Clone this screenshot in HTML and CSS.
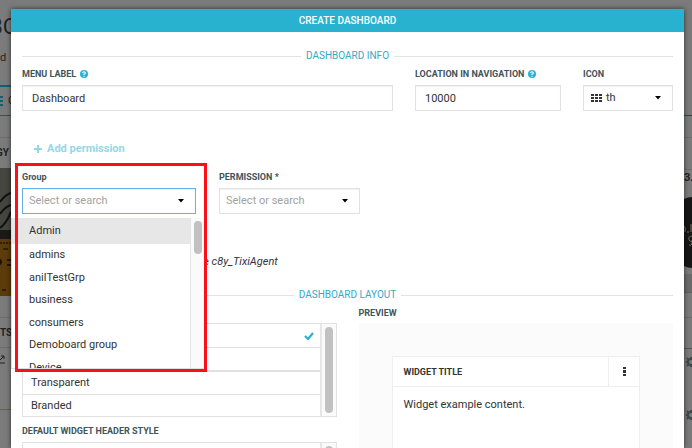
FILE: index.html
```html
<!DOCTYPE html>
<html lang="en">
<head>
<meta charset="utf-8">
<title>Create dashboard</title>
<link rel="stylesheet" href="styles.css">
</head>
<body>
<div class="backdrop" aria-hidden="true">
  <div class="side side-left">
    <div class="page-title">BC</div>
    <div class="crumb">d</div>
    <div class="tab">
      <svg width="3" height="10" viewBox="0 0 3 10"><path d="M0 0h3v2H0zM0 4h3v2H0zM0 8h3v2H0z" fill="#12606d"/></svg>
      <span>C</span>
    </div>
    <div class="gap-row"></div>
    <div class="card-title">GY</div>
    <svg class="photo" width="11" height="128" viewBox="0 0 11 128">
      <path d="M0 0h11v128H0z" fill="#454640"/>
      <path d="M0 34Q6 26 11 25M0 46Q6 38 11 37M0 60Q6 56 11 44" fill="none" stroke="#111" stroke-width="2"/>
      <path d="M0 71h11v57H0z" fill="#5d3c0b"/>
      <path d="M0 62h11v9H0z" fill="#1b1a16"/>
      <path d="M0 75h2M3 75h2M6 75h2M9 75h2M3 81h5M2 122h4" stroke="#2b210d" stroke-width="2"/>
      <circle cx="-1" cy="94" r="3" fill="#181209"/>
      <path d="M7 92h4M7 97h4" stroke="#1d1609" stroke-width="2"/>
    </svg>
    <div class="photo-foot"></div>
    <div class="card-title second">TS</div>
    <div class="chart">
      <svg width="5" height="9" viewBox="0 0 5 9"><path d="M0 5l4-4M1 1h3v3M0 8h5" fill="none" stroke="#222" stroke-width="1"/></svg>
    </div>
    <div class="chart-rest"></div>
  </div>
  <div class="side side-right">
    <div class="r-top"></div>
    <div class="r-tab"></div>
    <div class="r-gap"></div>
    <div class="r-title">3.</div>
    <svg width="8" height="72" viewBox="0 0 8 72">
      <path d="M0 2Q4 0 8 0v71Q4 71 0 69z" fill="#161616"/>
      <path d="M0 29q2 1 1 6M3 35h2M7 27v8M8 39q-4 0-3 4 1 2 3 1v3q-1 2-3 1" stroke="#77705f" stroke-width="1" fill="none"/>
    </svg>
    <div class="r-foot"></div>
    <div class="r-band"></div>
    <div class="r-row"></div>
    <div class="r-head"></div>
    <div class="gears">
      <svg width="6" height="10" viewBox="0 0 6 10"><circle cx="5" cy="5" r="3" fill="none" stroke="#3e4a4b" stroke-width="2"/><path d="M0 5h2M5 0v2M5 8v2M1 1l2 2M1 9l2-2" stroke="#3e4a4b" stroke-width="2"/></svg>
      <svg width="6" height="10" viewBox="0 0 6 10"><circle cx="5" cy="5" r="3" fill="none" stroke="#3e4a4b" stroke-width="2"/><path d="M0 5h2M5 0v2M5 8v2M1 1l2 2M1 9l2-2" stroke="#3e4a4b" stroke-width="2"/></svg>
    </div>
  </div>
</div>

<main class="modal" role="dialog" aria-labelledby="modal-title">
  <h1 class="modal-title" id="modal-title">CREATE DASHBOARD</h1>
  <form class="modal-body">
    <h2 class="legend">DASHBOARD INFO</h2>
    <div class="info-row">
      <div class="field grow">
        <div class="label-line">
          <label for="menu-label">MENU LABEL</label>
          <svg width="8" height="8" viewBox="0 0 8 8"><circle cx="4" cy="4" r="4" fill="#28b2cf"/><path d="M2.6 3.1Q2.7 1.8 4 1.8T5.4 3Q5.4 3.8 4 4.2v.8M4 5.7v1" fill="none" stroke="#fff" stroke-width="1.1"/></svg>
        </div>
        <input class="control" id="menu-label" type="text" value="Dashboard">
      </div>
      <div class="field location">
        <div class="label-line">
          <label for="location">LOCATION IN NAVIGATION</label>
          <svg width="8" height="8" viewBox="0 0 8 8"><circle cx="4" cy="4" r="4" fill="#28b2cf"/><path d="M2.6 3.1Q2.7 1.8 4 1.8T5.4 3Q5.4 3.8 4 4.2v.8M4 5.7v1" fill="none" stroke="#fff" stroke-width="1.1"/></svg>
        </div>
        <input class="control" id="location" type="text" value="10000">
      </div>
      <div class="field icon-field">
        <div class="label-line"><label for="icon">ICON</label></div>
        <button class="control icon-button" id="icon" type="button">
          <svg width="11" height="8" viewBox="0 0 11 8"><path d="M0 0h3v2H0zM4 0h3v2H4zM8 0h3v2H8zM0 3h3v2H0zM4 3h3v2H4zM8 3h3v2H8zM0 6h3v2H0zM4 6h3v2H4zM8 6h3v2H8z" fill="#333"/></svg>
          <span>th</span>
          <svg class="caret" width="6" height="4" viewBox="0 0 6 4"><path d="M0 0h6L3 3.6z" fill="#000"/></svg>
        </button>
      </div>
    </div>

    <button class="add" type="button">
      <svg width="8" height="8" viewBox="0 0 8 8"><path d="M4 0v8M0 4h8" stroke="#93d8e7" stroke-width="2"/></svg>
      <span>Add permission</span>
    </button>

    <div class="permission-row">
      <div class="field group-field">
        <div class="label-line"><label for="group">Group</label></div>
        <div class="control combo focused">
          <input id="group" type="text" placeholder="Select or search">
          <svg width="6" height="4" viewBox="0 0 6 4"><path d="M0 0h6L3 3.6z" fill="#000"/></svg>
        </div>
        <div class="menu">
          <ul class="options" role="listbox" aria-label="Group">
            <li class="active" role="option" aria-selected="true">Admin</li>
            <li role="option">admins</li>
            <li role="option">anilTestGrp</li>
            <li role="option">business</li>
            <li role="option">consumers</li>
            <li role="option">Demoboard group</li>
            <li role="option">Device</li>
          </ul>
          <div class="track"><div class="thumb"></div></div>
        </div>
        <div class="highlight"></div>
      </div>
      <div class="field permission-field">
        <div class="label-line"><label for="permission">PERMISSION *</label></div>
        <div class="control combo">
          <input id="permission" type="text" placeholder="Select or search">
          <svg width="6" height="4" viewBox="0 0 6 4"><path d="M0 0h6L3 3.6z" fill="#000"/></svg>
        </div>
      </div>
    </div>

    <p class="note">e <em>c8y_TixiAgent</em></p>

    <h2 class="legend">DASHBOARD LAYOUT</h2>
    <div class="layout-row">
      <section class="column">
        <div class="style-list first">
          <div class="choices">
            <button type="button" aria-label="First style">
              <svg width="10" height="8" viewBox="0 0 10 8"><path d="M1 4l3 3 5-6" fill="none" stroke="#28b2cf" stroke-width="2.2"/></svg>
            </button>
            <button type="button" aria-label="Second style"></button>
            <button type="button">Transparent</button>
            <button type="button">Branded</button>
          </div>
          <div class="track"><div class="thumb"></div></div>
        </div>
        <h3 class="subhead">DEFAULT WIDGET HEADER STYLE</h3>
        <div class="style-list">
          <div class="choices">
            <button type="button" aria-label="Header style"></button>
          </div>
          <div class="track"><div class="thumb"></div></div>
        </div>
      </section>
      <section class="column">
        <h3 class="preview-label">PREVIEW</h3>
        <div class="preview">
          <article class="widget">
            <header>
              <h4>WIDGET TITLE</h4>
              <button type="button" aria-label="More">
                <svg width="3" height="9" viewBox="0 0 3 9"><path d="M0 0h3v2H0zM0 3h3v3H0zM0 7h3v2H0z" fill="#333"/></svg>
              </button>
            </header>
            <p>Widget example content.</p>
          </article>
        </div>
      </section>
    </div>
  </form>
</main>
</body>
</html>
```
FILE: styles.css
```css
* {
  box-sizing: border-box;
}

body {
  margin: 0;
  height: 100vh;
  overflow: hidden;
  position: relative;
  background: #7b7b7b;
  color: #333;
  font: 11px/16px Roboto, "Liberation Sans", sans-serif;
}

h1, h2, h3, h4, p, ul {
  margin: 0;
  padding: 0;
  font-size: inherit;
}

button, input {
  font: inherit;
  color: inherit;
}

svg {
  display: block;
  flex: none;
}

/* Dimmed page behind the dialog */
.backdrop {
  position: absolute;
  inset: 0;
  display: flex;
  justify-content: space-between;
}

.side {
  overflow: hidden;
  color: #222;
}

.side-left {
  width: 11px;
}

.side-right {
  width: 8px;
}

.page-title {
  height: 50px;
  padding-top: 16px;
  font-size: 22px;
  line-height: 22px;
  text-indent: -11px;
}

.crumb {
  height: 35px;
}

.tab {
  display: flex;
  align-items: center;
  gap: 5px;
  height: 31px;
  border-top: 2px solid #12606d;
  border-bottom: 1px solid #12606d;
}

.gap-row {
  height: 22px;
  border-bottom: 1px solid #6d6d6d;
}

.card-title {
  height: 30px;
  padding-top: 7px;
  text-indent: -4px;
  font-size: 10px;
  font-weight: 700;
}

.photo-foot {
  height: 22px;
  border-bottom: 1px solid #6d6d6d;
}

.second {
  text-indent: 0;
  border-bottom: 1px solid #6d6d6d;
}

.chart {
  height: 62px;
  padding-top: 7px;
  border-bottom: 1px solid #7a5a4b;
}

.r-top {
  height: 116px;
  border-bottom: 1px solid #174f58;
}

.r-tab {
  height: 22px;
  border-bottom: 1px solid #6d6d6d;
}

.r-gap {
  height: 32px;
  border-bottom: 1px solid #6d6d6d;
}

.r-title {
  height: 27px;
  font-weight: 700;
}

.r-foot {
  height: 5px;
}

.r-band {
  height: 19px;
  background: #6b6b6b;
  border-bottom: 1px solid #606060;
}

.r-row {
  height: 25px;
  border-bottom: 1px solid #6d6d6d;
}

.r-head {
  height: 31px;
  border-bottom: 1px solid #555;
}

.gears {
  display: grid;
  justify-content: end;
  gap: 43px;
  padding-top: 8px;
}

/* Dialog */
.modal {
  position: relative;
  height: calc(100vh - 9px);
  margin: 9px 8px 0 11px;
  overflow: hidden;
  background: #fff;
  box-shadow: 0 0 5px rgba(0, 0, 0, .6);
}

body::before {
  content: "";
  display: table;
}

.modal-title {
  height: 23px;
  background: #28b2cf;
  color: #fff;
  font-weight: 500;
  font-size: 10px;
  line-height: 23px;
  text-align: center;
}

.modal-body {
  padding: 16px 11px 0;
}

.legend {
  display: flex;
  align-items: center;
  gap: 5px;
  color: #36a9c4;
  font-size: 10px;
  font-weight: 400;
}

.legend::before,
.legend::after {
  content: "";
  flex: 1;
  height: 1px;
  background: #e3e3e3;
}

.info-row {
  display: flex;
  gap: 22px;
  margin-top: 2px;
}

.grow {
  flex: 1;
}

.location {
  width: 146px;
}

.icon-field {
  width: 90px;
}

.label-line {
  display: flex;
  align-items: center;
  gap: 4px;
  height: 16px;
  margin-bottom: 3px;
  color: #40545a;
  font-size: 9px;
  font-weight: 700;
}

.control {
  display: block;
  width: 100%;
  height: 26px;
  padding: 0 9px;
  border: 1px solid #e1e1e1;
  border-radius: 0;
  outline: 0;
  background: #fff;
  box-shadow: inset 0 1px 1px rgba(0, 0, 0, .06);
}

.icon-button {
  display: flex;
  align-items: center;
  gap: 4px;
  padding: 0 11px 0 7px;
}

.caret {
  margin-left: auto;
}

.add {
  display: flex;
  align-items: center;
  gap: 5px;
  margin: 30px 0 12px 12px;
  padding: 0;
  border: 0;
  background: none;
  color: #93d8e7;
  font-weight: 700;
}

.permission-row {
  display: flex;
  gap: 23px;
}

.group-field {
  position: relative;
  width: 174px;
}

.permission-field {
  width: 141px;
}

.combo {
  display: flex;
  align-items: center;
  padding: 0 11px 0 6px;
}

.combo input {
  flex: 1;
  min-width: 0;
  padding: 0;
  border: 0;
  outline: 0;
  background: none;
}

.combo input::placeholder {
  color: #a2a2a2;
  opacity: 1;
}

.focused {
  border-color: #66afe9;
}

.menu {
  position: absolute;
  z-index: 1;
  top: 49px;
  left: -11px;
  display: flex;
  width: 194px;
  height: 151px;
  overflow: hidden;
  border: 1px solid #ddd;
  border-top: 0;
  background: #fff;
}

.options {
  flex: 1;
  list-style: none;
}

.options li {
  height: 22px;
  padding-left: 17px;
  line-height: 22px;
}

.options li:nth-child(even) {
  height: 23px;
}

.options .active {
  height: 26px;
  background: #e7e7e7;
  line-height: 26px;
}

.track {
  flex: none;
  width: 14px;
  padding: 3px;
  border-left: 1px solid #e6e6e6;
  background: #fafafa;
}

.thumb {
  width: 8px;
  height: 33px;
  border-radius: 4px;
  background: #c1c1c1;
}

.highlight {
  position: absolute;
  z-index: 2;
  top: -6px;
  left: -7px;
  width: 192px;
  height: 209px;
  border: 3px solid #fb1018;
}

.note {
  margin: 40px 0 17px 181px;
}

.layout-row {
  display: grid;
  grid-template-columns: 1fr 1fr;
  gap: 22px;
  margin-top: 2px;
}

.column > .first {
  margin-top: 18px;
}

.style-list {
  display: flex;
  border: 1px solid #e1e1e1;
}

.choices {
  flex: 1;
}

.choices button {
  display: flex;
  align-items: center;
  width: 100%;
  height: 24px;
  padding: 0 8px;
  border: 0;
  border-bottom: 1px solid #e1e1e1;
  background: none;
}

.choices button:nth-child(2) {
  border-bottom-width: 2px;
}

.choices button:nth-child(3) {
  height: 23px;
}

.choices button:last-child {
  height: 21px;
  border-bottom: 0;
}

.choices svg {
  margin-left: auto;
  margin-right: -2px;
}

.style-list .track {
  width: 16px;
  border-left-width: 2px;
}

.first .thumb {
  height: 86px;
}

.subhead,
.preview-label {
  color: #40545a;
  font-size: 9px;
  font-weight: 700;
}

.subhead {
  margin: 6px 0 3px;
}

.preview-label {
  margin-bottom: 2px;
}

.preview {
  height: 140px;
  padding: 33px;
  background: #fbfbfb;
}

.widget {
  height: 120px;
  border: 1px solid #eee;
  background: #fff;
}

.widget header {
  display: flex;
  height: 30px;
  border-bottom: 1px solid #eee;
}

.widget h4 {
  flex: 1;
  padding-left: 11px;
  font-size: 9px;
  line-height: 30px;
}

.widget header button {
  display: grid;
  place-items: center;
  width: 31px;
  padding: 0;
  border: 0;
  border-left: 1px solid #eee;
  background: none;
}

.widget p {
  padding: 10px 11px;
}
```
